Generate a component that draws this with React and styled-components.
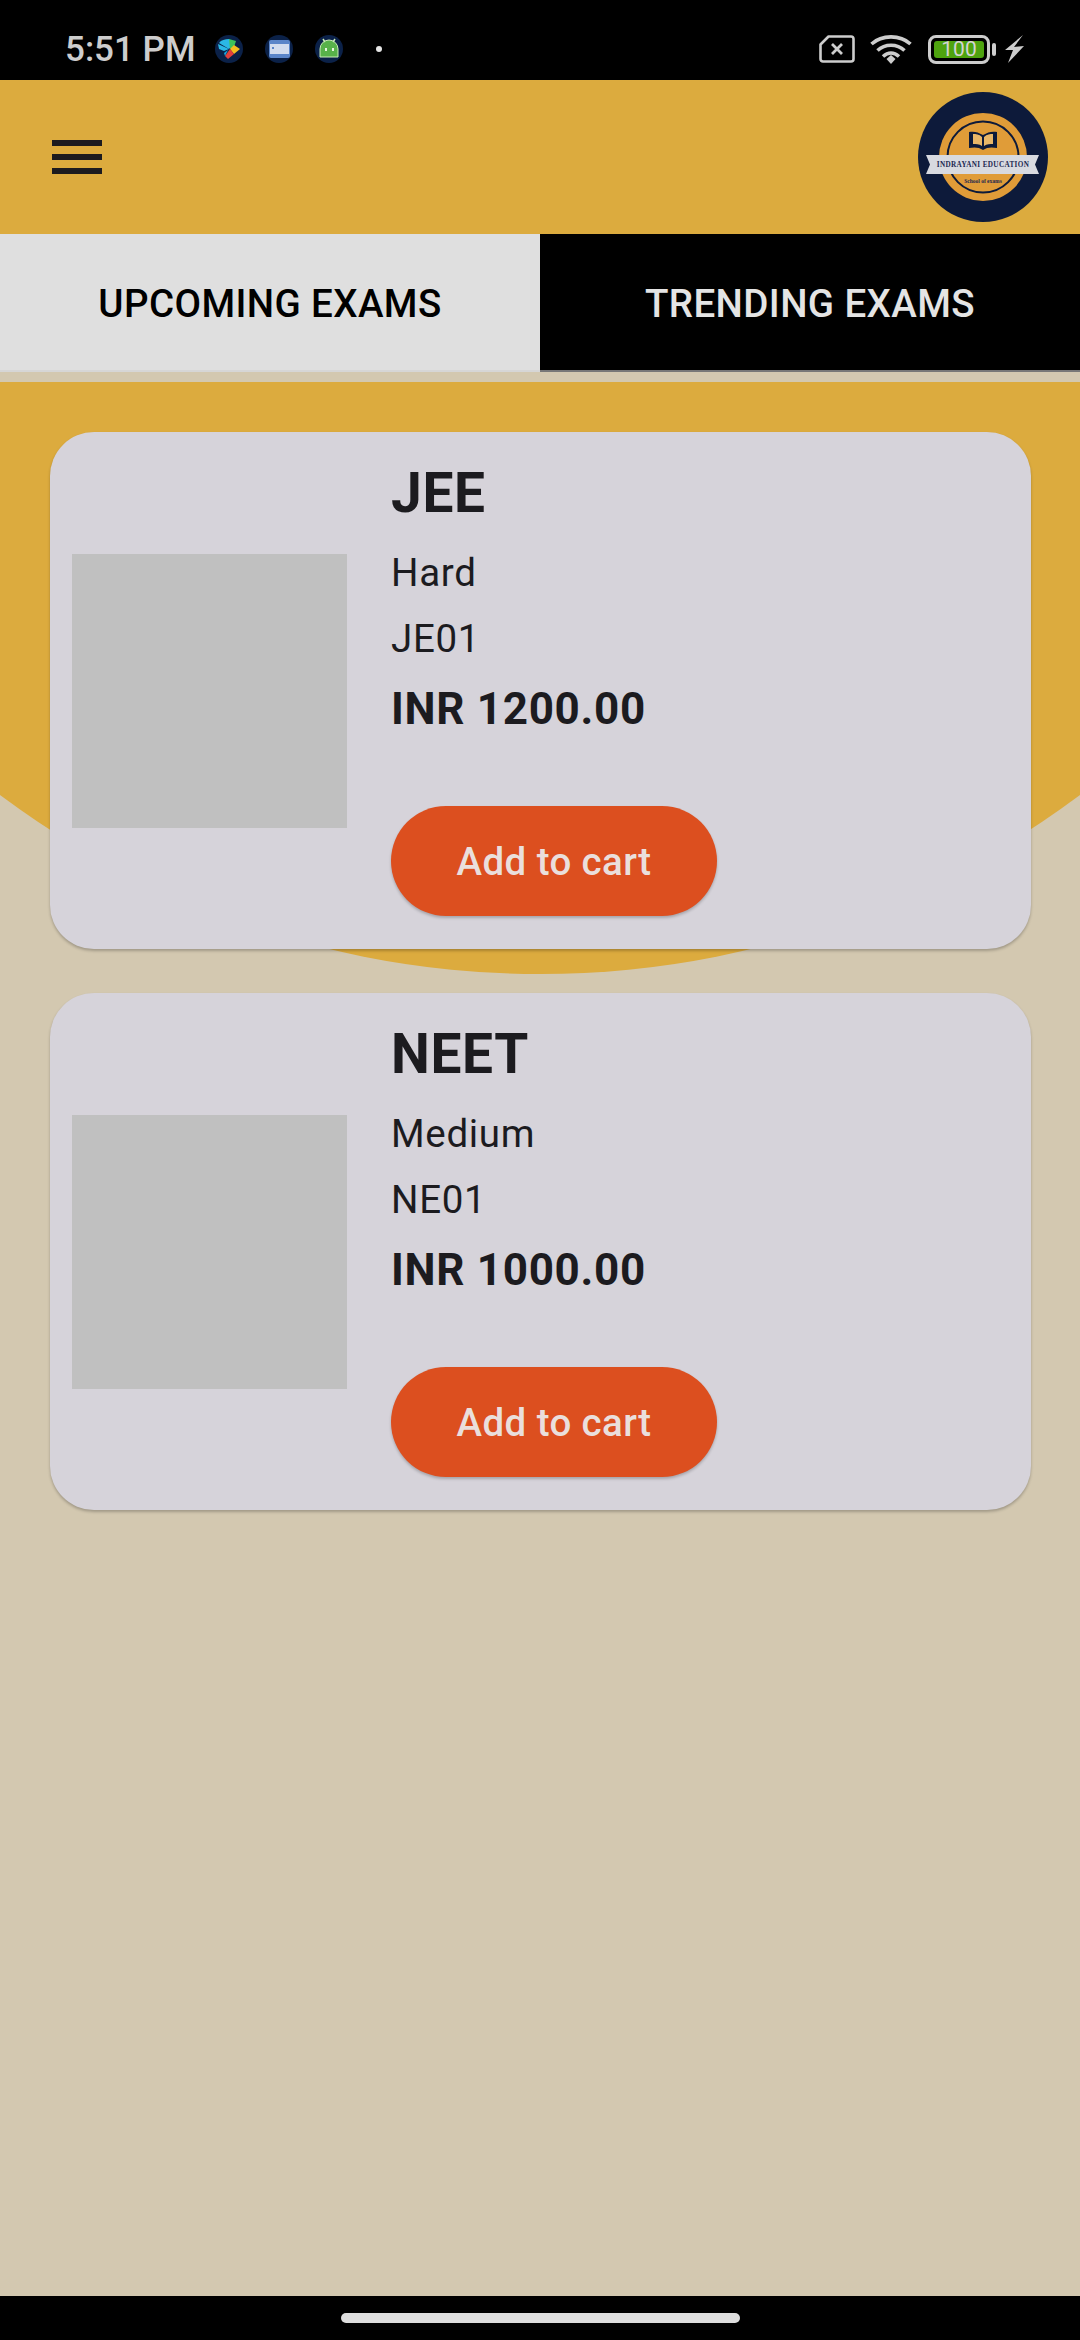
import React from "react";
import styled, { createGlobalStyle } from "styled-components";

const Global = createGlobalStyle`
  html, body { margin: 0; padding: 0; background: #d3c8b0; }
  * { box-sizing: border-box; }
`;

const Page = styled.div`
  width: 1080px;
  height: 2340px;
  display: flex;
  flex-direction: column;
  overflow: hidden;
  font-family: Roboto, "Liberation Sans", sans-serif;
  background: #d3c8b0;
`;

const StatusBar = styled.div`
  height: 80px;
  flex: none;
  background: #000;
  display: flex;
  align-items: center;
  justify-content: space-between;
  padding: 18px 56px 0 65px;
  color: #cdcdcd;
`;

const StatusGroup = styled.div`
  display: flex;
  align-items: center;
  gap: ${(p) => p.$gap}px;
`;

const Time = styled.span`
  font-size: 35px;
  font-weight: 500;
  line-height: 34px;
  margin-right: -3px;
  padding-top: 2px;
`;

const Header = styled.header`
  height: 154px;
  flex: none;
  background: #dcab3e;
  display: flex;
  align-items: center;
  justify-content: space-between;
  padding: 0 32px 0 52px;
`;

const Tabs = styled.nav`
  height: 138px;
  flex: none;
  display: grid;
  grid-template-columns: 1fr 1fr;
`;

const Tab = styled.div`
  display: flex;
  align-items: center;
  justify-content: center;
  padding-top: 3px;
  font-size: 38.5px;
  font-weight: 500;
  letter-spacing: 0.4px;
  background: ${(p) => (p.$active ? "#dfdfdf" : "#000")};
  color: ${(p) => (p.$active ? "#000" : "#e4e4e4")};
  border-bottom: 2px solid ${(p) => (p.$active ? "#d6d6d6" : "#777")};
`;

const Content = styled.main`
  flex: 1;
  position: relative;
  padding: 60px 49px 0 50px;
  display: flex;
  flex-direction: column;
  gap: 44px;
  overflow: hidden;
`;

const GoldArc = styled.div`
  position: absolute;
  left: 0;
  right: 0;
  top: 10px;
  height: 592px;
  background: #dcab3e;
  clip-path: ellipse(904px 904px at 540px -312px);
`;

const Card = styled.article`
  position: relative;
  display: flex;
  align-items: center;
  gap: 44px;
  padding: 0 22px;
  background: #d6d3da;
  border-radius: 44px;
  box-shadow: 0 2px 3px rgba(0, 0, 0, 0.24);
`;

const Thumb = styled.div`
  width: 275px;
  height: 274px;
  flex: none;
  background: #c0c0c0;
`;

const Info = styled.div`
  display: flex;
  flex-direction: column;
  align-items: flex-start;
  gap: 22px;
  padding: 29px 0 33px;
  color: #1c1b1f;
`;

const Title = styled.h2`
  margin: 0 0 4px;
  font-size: 55px;
  line-height: 64px;
  font-weight: 700;
  letter-spacing: 0.69px;
`;

const Detail = styled.div`
  font-size: 38.5px;
  line-height: 44px;
  font-weight: 400;
  letter-spacing: 0.69px;
`;

const Price = styled.div`
  font-size: 44px;
  line-height: 50px;
  font-weight: 700;
  letter-spacing: 0.69px;
  position: relative;
  top: 1px;
`;

const CartButton = styled.button`
  margin-top: 51px;
  width: 326px;
  height: 110px;
  padding: 0;
  border: 0;
  border-radius: 55px;
  background: #dc4f1f;
  color: #eadfdc;
  font-family: inherit;
  font-size: 38.5px;
  font-weight: 500;
  letter-spacing: 0.4px;
  box-shadow: 0 2px 3px rgba(0, 0, 0, 0.22);
`;

const NavBar = styled.div`
  height: 44px;
  flex: none;
  background: #000;
  display: flex;
  justify-content: center;
  padding-top: 17px;
`;

const HomePill = styled.div`
  width: 399px;
  height: 10px;
  border-radius: 5px;
  background: #dedede;
`;

const Badge = ({ children }) => (
  <svg width="28" height="28" viewBox="0 0 28 28">
    <circle cx="14" cy="14" r="14" fill="#0b2148" />
    {children}
  </svg>
);

const PlayBadge = () => (
  <Badge>
    <path d="M4 8 C6 5 10 4 14 4 L19 8 L14 14 Z" fill="#2bb8e6" />
    <path d="M14 4 L21 6 L19 12 L15 14Z" fill="#3ec25a" />
    <path d="M19 10 L25 14 L19 19 L15 14Z" fill="#f5bd1f" />
    <path d="M15 14 L19 19 L13 24 L10 21Z" fill="#e2403c" />
    <path d="M3 9 L14 14 L9 16 L4 14Z" fill="#2bb8e6" />
    <path d="M9 18 L13 15 L10 21Z" fill="#19a7df" />
  </Badge>
);

const CardBadge = () => (
  <Badge>
    <rect x="4" y="5" width="21" height="18" rx="2" fill="#5a85c9" />
    <rect x="5" y="9" width="19" height="10" fill="#d2dcee" />
    <rect x="7" y="12" width="2" height="2" fill="#5a85c9" />
  </Badge>
);

const DroidBadge = () => (
  <Badge>
    <path d="M5 22 V14 a9 9 0 0 1 18 0 V22 Z" fill="#58b14a" stroke="#c9ecb7" strokeWidth="1" />
    <path d="M8 4 L10 7 M20 4 L18 7" stroke="#c9ecb7" strokeWidth="1.5" />
    <rect x="10" y="13" width="2" height="3" fill="#e6f6dc" />
    <rect x="17" y="13" width="2" height="3" fill="#e6f6dc" />
  </Badge>
);

const Dot = styled.span`
  width: 6px;
  height: 6px;
  border-radius: 50%;
  background: #e6e6e6;
  margin-left: 11px;
`;

const NoSim = () => (
  <svg width="36" height="28" viewBox="0 0 36 28">
    <path d="M9.5 1.5 H32 a2.5 2.5 0 0 1 2.5 2.5 V24 a2.5 2.5 0 0 1 -2.5 2.5 H4 a2.5 2.5 0 0 1 -2.5 -2.5 V9.5 Z" fill="none" stroke="#cdcdcd" strokeWidth="2.6" strokeLinejoin="round" />
    <path d="M13 9 L23 19 M23 9 L13 19" stroke="#cdcdcd" strokeWidth="2.8" />
  </svg>
);

const Wifi = () => (
  <svg width="42" height="30" viewBox="0 0 42 30">
    <g fill="none" stroke="#cdcdcd" strokeWidth="3.6">
      <path d="M1.5 10 C12 0.5 30 0.5 40.5 10" />
      <path d="M7.5 16.5 C15 9.5 27 9.5 34.5 16.5" />
      <path d="M13 22.5 C18 18 24 18 29 22.5" />
    </g>
    <path d="M16.5 25 L21 21 L25.5 25 L21 30 Z" fill="#cdcdcd" />
  </svg>
);

const BatteryShell = styled.div`
  width: 62px;
  height: 29px;
  margin-left: 1px;
  padding: 3px;
  border: 3px solid #cdcdcd;
  border-radius: 8px;
  position: relative;
  display: flex;
  &::after {
    content: "";
    position: absolute;
    right: -9px;
    top: 5px;
    width: 4px;
    height: 13px;
    border-radius: 2px;
    background: #cdcdcd;
  }
`;

const BatteryFill = styled.div`
  flex: 1;
  background: #4ea30f;
  border-radius: 3px;
  color: #d4d4d4;
  font-size: 21px;
  line-height: 17px;
  text-align: center;
`;

const Bolt = () => (
  <svg width="19" height="28" viewBox="0 0 19 28">
    <path d="M18 0 L9 12 L19 11 L3 28 L8 15 L0 15 Z" fill="#cdcdcd" />
  </svg>
);

const Menu = () => (
  <svg width="50" height="34" viewBox="0 0 50 34">
    <rect y="0" width="50" height="6" fill="#1c1b1f" />
    <rect y="14" width="50" height="6" fill="#1c1b1f" />
    <rect y="28" width="50" height="6" fill="#1c1b1f" />
  </svg>
);

const Logo = () => (
  <svg width="130" height="132" viewBox="0 0 130 132">
    <circle cx="65" cy="66" r="65" fill="#0d1a3a" />
    <circle cx="65" cy="66" r="44" fill="#e09c38" />
    <circle cx="65" cy="66" r="35.5" fill="none" stroke="#0d1a3a" strokeWidth="2" />
    <path d="M65 44 C60 41 56 40 51 41 V57 C56 56 61 56 65 59 C69 56 74 56 79 57 V41 C74 40 70 41 65 44Z" fill="#0d1a3a" />
    <path d="M64 46 C61 43 58 43 55 43 V53 C58 53 61 53 64 55Z M66 46 C69 43 72 43 75 43 V53 C72 53 69 53 66 55Z" fill="#e9b768" />
    <path d="M8 64 H121 L117 73.5 L121 83 H8 L12 73.5 Z" fill="#d8dae0" />
    <text x="65" y="76" textAnchor="middle" fontFamily="'Liberation Serif', serif" fontWeight="700" fontSize="7.2" letterSpacing="0.35" fill="#1c2750">INDRAYANI EDUCATION</text>
    <text x="65" y="92" textAnchor="middle" fontFamily="'Liberation Serif', serif" fontWeight="700" fontSize="5.5" fill="#1c2750">School of exams</text>
  </svg>
);

const exams = [
  { name: "JEE", level: "Hard", code: "JE01", price: "INR 1200.00" },
  { name: "NEET", level: "Medium", code: "NE01", price: "INR 1000.00" },
];

export default function App() {
  return (
    <Page>
      <Global />
      <StatusBar>
        <StatusGroup $gap={22}>
          <Time>5:51 PM</Time>
          <PlayBadge />
          <CardBadge />
          <DroidBadge />
          <Dot />
        </StatusGroup>
        <StatusGroup $gap={15}>
          <NoSim />
          <Wifi />
          <BatteryShell>
            <BatteryFill>100</BatteryFill>
          </BatteryShell>
          <Bolt />
        </StatusGroup>
      </StatusBar>
      <Header>
        <Menu />
        <Logo />
      </Header>
      <Tabs>
        <Tab $active>UPCOMING EXAMS</Tab>
        <Tab>TRENDING EXAMS</Tab>
      </Tabs>
      <Content>
        <GoldArc />
        {exams.map((e) => (
          <Card key={e.code}>
            <Thumb />
            <Info>
              <Title>{e.name}</Title>
              <Detail>{e.level}</Detail>
              <Detail>{e.code}</Detail>
              <Price>{e.price}</Price>
              <CartButton>Add to cart</CartButton>
            </Info>
          </Card>
        ))}
      </Content>
      <NavBar>
        <HomePill />
      </NavBar>
    </Page>
  );
}
